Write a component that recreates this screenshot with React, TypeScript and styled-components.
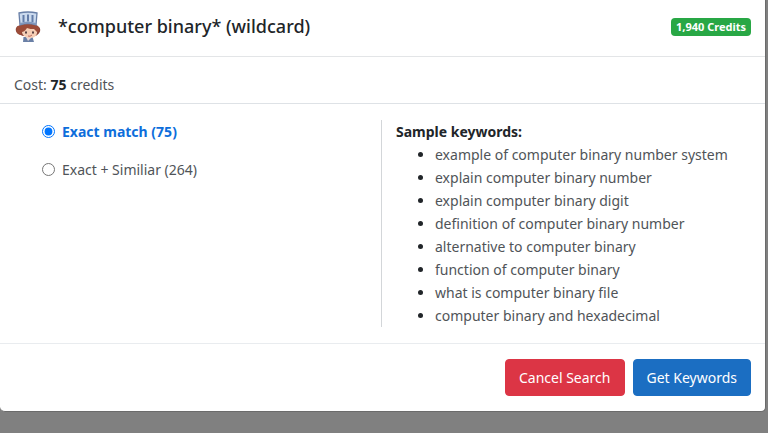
import React, { useState } from "react";
import styled, { createGlobalStyle } from "styled-components";

const GlobalStyle = createGlobalStyle`
  *, *::before, *::after { box-sizing: border-box; }
  body {
    margin: 0;
    background: #808080;
    color: #212529;
    font-family: "Noto Sans", "Open Sans", sans-serif;
    font-size: 14px;
    line-height: 23px;
  }
`;

const Modal = styled.main`
  margin-right: 2px;
  background: #fff;
  border: solid #6b6b6b;
  border-width: 0 1px 1px 0;
  border-radius: 0 0 5px 5px;
`;

const Header = styled.header`
  display: flex;
  align-items: center;
  gap: 16px;
  padding: 9px 14px 12px;
  border-bottom: 1px solid #e3e5e7;
`;

const Title = styled.h1`
  flex: 1;
  margin: 0;
  font-size: 18px;
  font-weight: 500;
  line-height: 35px;
`;

const Badge = styled.span`
  padding: 0 5px;
  border-radius: 4px;
  background: #28a745;
  color: #fff;
  font-size: 11px;
  font-weight: 700;
  line-height: 18px;
`;

const Cost = styled.p`
  margin: 0;
  padding: 16px 14px 7px;
  border-bottom: 1px solid #dee2e6;
  color: #505458;

  strong { color: #212529; }
`;

const Body = styled.div`
  display: grid;
  grid-template-columns: 381fr 384fr;
  padding: 16px 0;
  border-bottom: 1px solid #e9ecef;
`;

const Options = styled.fieldset`
  display: flex;
  flex-direction: column;
  gap: 15px;
  min-width: 0;
  margin: 0;
  padding: 0 16px 0 42px;
  border: 0;
`;

const Option = styled.label<{ $selected: boolean }>`
  display: flex;
  align-items: center;
  gap: 7px;
  color: ${(p) => (p.$selected ? "#0d6edb" : "#505458")};
  font-weight: ${(p) => (p.$selected ? 700 : 400)};
`;

const Radio = styled.input`
  width: 13px;
  height: 13px;
  margin: 0;
  accent-color: #0075ff;
`;

const Samples = styled.section`
  padding-left: 14px;
  border-left: 1px solid #d3d6d9;
`;

const SamplesTitle = styled.h2`
  margin: 0;
  font-size: 14px;
  font-weight: 700;
  line-height: 23px;
`;

const KeywordList = styled.ul`
  margin: 0;
  padding-left: 39px;
  color: #505458;

  li::marker { color: #212529; }
`;

const Footer = styled.footer`
  display: flex;
  justify-content: flex-end;
  gap: 8px;
  padding: 15px 14px;
`;

const Button = styled.button<{ $tone: "danger" | "primary" }>`
  padding: 6px 13px;
  border: 1px solid ${(p) => (p.$tone === "danger" ? "#dc3545" : "#1b6ec2")};
  border-radius: 4px;
  background: ${(p) => (p.$tone === "danger" ? "#dc3545" : "#1b6ec2")};
  color: #fff;
  font-family: inherit;
  font-size: 14px;
  line-height: 23px;
`;

const Logo = () => (
  <svg width="28" height="32" viewBox="0 0 28 32" aria-hidden="true">
    <path d="M9.500 26h9l1.500 5H9z" fill="#6a80a6" />
    <path d="m12 26 2 4 4-4z" fill="#e8d8d7" />
    <path d="M4 15C1 16 1 21 4 23l5 2h12c4-1 7-6 4-9z" fill="#8a4437" />
    <path d="M8 18c4-3 11-2 15 0 1 6-2 9-7 9s-9-3-8-9z" fill="#f6ceb5" />
    <path d="M4 15c6-4 15-4 20 0 3 3 1 6-1 6l-3-3c-2 0-5 0-7-1-2 3-4 4-5 4l-1 3c-5-1-6-6-3-9z" fill="#9c4c39" />
    <path d="M5 2q9-2 18 0l-1 12q-8-3-16 0z" fill="#cbdaee" stroke="#687fa7" strokeWidth="1.300" />
    <path d="M9.500 4v7M14 3.500v7M18.500 4v7" stroke="#637ca8" strokeWidth="2" />
    <path d="M6 12q8-3 16 0v2q-8-3-16 0z" fill="#8298bd" />
    <ellipse cx="12" cy="21.500" rx="1" ry="1.200" fill="#513a3c" />
    <ellipse cx="19" cy="21.500" rx="1" ry="1.200" fill="#513a3c" />
    <path d="M14 25q2 1 4-1" fill="none" stroke="#ba6962" />
  </svg>
);

const keywords = [
  "example of computer binary number system",
  "explain computer binary number",
  "explain computer binary digit",
  "definition of computer binary number",
  "alternative to computer binary",
  "function of computer binary",
  "what is computer binary file",
  "computer binary and hexadecimal",
];

const options = [
  { id: "exact", label: "Exact match", count: 75 },
  { id: "similar", label: "Exact + Similiar", count: 264 },
];

export default function App() {
  const [selected, setSelected] = useState(options[0]);
  return (
    <>
      <GlobalStyle />
      <Modal>
        <Header>
          <Logo />
          <Title>*computer binary* (wildcard)</Title>
          <Badge>1,940 Credits</Badge>
        </Header>
        <Cost>Cost: <strong>{selected.count}</strong> credits</Cost>
        <Body>
          <Options aria-label="Match type">
            {options.map((o) => (
              <Option key={o.id} htmlFor={o.id} $selected={o.id === selected.id}>
                <Radio
                  id={o.id}
                  type="radio"
                  name="match"
                  checked={o.id === selected.id}
                  onChange={() => setSelected(o)}
                />
                <span>{o.label} ({o.count})</span>
              </Option>
            ))}
          </Options>
          <Samples>
            <SamplesTitle>Sample keywords:</SamplesTitle>
            <KeywordList>
              {keywords.map((k) => <li key={k}>{k}</li>)}
            </KeywordList>
          </Samples>
        </Body>
        <Footer>
          <Button type="button" $tone="danger">Cancel Search</Button>
          <Button type="button" $tone="primary">Get Keywords</Button>
        </Footer>
      </Modal>
    </>
  );
}
